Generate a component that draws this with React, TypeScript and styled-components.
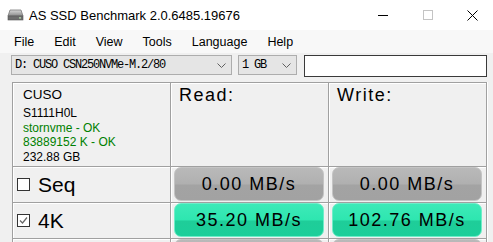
import React from 'react';
import styled, { createGlobalStyle } from 'styled-components';

const GlobalStyle = createGlobalStyle`
  html, body {
    margin: 0;
    padding: 0;
  }
  body {
    width: 493px;
    height: 242px;
    overflow: hidden;
    background: #f0f0f0;
    font-family: "Liberation Sans", Arial, sans-serif;
  }
`;

const Window = styled.div`
  width: 493px;
  height: 242px;
  overflow: hidden;
  background: #f0f0f0;
`;

const TitleBar = styled.div`
  display: flex;
  align-items: center;
  height: 30px;
  background: #fff;
  padding-left: 7px;
`;

const Title = styled.span`
  flex: 1;
  margin-left: 5px;
  font-size: 13px;
  color: #000;
`;

const Controls = styled.div`
  display: flex;
  margin-right: -2px;
`;

const WinButton = styled.div`
  width: 45px;
  height: 30px;
  display: flex;
  align-items: center;
  justify-content: center;
`;

const MenuBar = styled.div`
  display: flex;
  align-items: center;
  height: 23px;
  padding-left: 4px;
  background: #f8f8f8;
`;

const MenuItem = styled.span`
  padding: 0 10px;
  font-size: 12.5px;
  color: #000;
`;

const Toolbar = styled.div`
  display: flex;
  align-items: flex-start;
  padding: 2px 0 0 11px;
`;

const Combo = styled.div<{ $w: number; $gap: number }>`
  box-sizing: border-box;
  width: ${p => p.$w}px;
  height: 20px;
  margin-right: ${p => p.$gap}px;
  display: flex;
  align-items: center;
  padding: 0 5px 0 3px;
  border: 1px solid #adadad;
  background: #e5e5e5;
  font-family: "Liberation Mono", monospace;
  font-size: 12px;
  letter-spacing: -1.2px;
  color: #000;
`;

const ComboText = styled.span`
  flex: 1;
  white-space: nowrap;
`;

const TextBox = styled.div`
  box-sizing: border-box;
  width: 183px;
  height: 22px;
  border: 1px solid #3a3a3a;
  background: #fff;
`;

const Grid = styled.div`
  display: grid;
  grid-template-columns: repeat(3, 158px);
  grid-template-rows: 84px 36px 36px 36px;
  margin: 5px 0 0 12px;
  width: 474px;
  border-right: 1px solid #a0a0a0;
  box-shadow: 1px 0 0 #fff;
`;

const Cell = styled.div`
  box-sizing: border-box;
  border-top: 1px solid #a0a0a0;
  border-left: 1px solid #a0a0a0;
  box-shadow: inset 1px 1px 0 #fff;
  display: flex;
  min-width: 0;
`;

const Info = styled.div`
  padding: 4px 0 0 10px;
  font-size: 12px;
  line-height: 14.5px;
`;

const Model = styled.div`
  font-size: 13.5px;
  line-height: 15px;
  margin-bottom: 4px;
  color: #000;
`;

const InfoLine = styled.div<{ $ok?: boolean }>`
  color: ${p => (p.$ok ? '#008000' : '#000')};
  white-space: nowrap;
`;

const Heading = styled.div`
  padding: 2px 0 0 8px;
  font-size: 18px;
  line-height: 21px;
  letter-spacing: 1.5px;
  color: #000;
`;

const Label = styled.div`
  display: flex;
  align-items: center;
  padding-left: 4px;
  font-size: 21px;
  color: #000;
`;

const Box = styled.div`
  box-sizing: border-box;
  width: 13px;
  height: 13px;
  margin-right: 8px;
  border: 1px solid #333;
  background: #fff;
  display: flex;
  align-items: center;
  justify-content: center;
`;

const Result = styled.div<{ $on: boolean }>`
  box-sizing: border-box;
  flex: 1;
  height: 34px;
  margin: 0 4px 0 3px;
  border-radius: 7px;
  display: flex;
  align-items: center;
  justify-content: center;
  font-size: 18px;
  letter-spacing: 1.5px;
  color: #000;
  border: 1px solid ${p => (p.$on ? '#6eedc8' : '#c4c4c4')};
  background: ${p =>
    p.$on
      ? 'linear-gradient(#3deab8 0%, #2ee6b0 50%, #1fcd99 53%, #1bcf9a 100%)'
      : 'linear-gradient(#b9b9b9 0%, #b0b0b0 50%, #a3a3a3 53%, #a2a2a2 100%)'};
`;

const DriveIcon = () => (
  <svg width="17" height="12" viewBox="0 0 17 12">
    <defs>
      <linearGradient id="dg" x1="0" y1="0" x2="0" y2="1">
        <stop offset="0" stopColor="#d8d8d8" />
        <stop offset="1" stopColor="#8a8a8a" />
      </linearGradient>
    </defs>
    <path d="M3 1 H14 L16 7 H1 Z" fill="url(#dg)" stroke="#7a7a7a" strokeWidth="0.8" />
    <rect x="1" y="7" width="15" height="4" fill="#6e6e6e" stroke="#555" strokeWidth="0.6" />
    <rect x="12" y="8.3" width="2" height="1.2" fill="#b8e0b0" />
  </svg>
);

const Chevron = () => (
  <svg width="9" height="5" viewBox="0 0 9 5">
    <path d="M0.5 0.5 L4.5 4.5 L8.5 0.5" fill="none" stroke="#606060" strokeWidth="1" />
  </svg>
);

const Check = () => (
  <svg width="9" height="9" viewBox="0 0 9 9">
    <path d="M1 4.5 L3.5 7 L8 1.5" fill="none" stroke="#666" strokeWidth="1.2" />
  </svg>
);

// the last row is cut by the window edge, only the button tops show
const rows = [
  { name: 'Seq', checked: false, read: '0.00 MB/s', write: '0.00 MB/s', on: false },
  { name: '4K', checked: true, read: '35.20 MB/s', write: '102.76 MB/s', on: true },
  { name: '', checked: false, read: '', write: '', on: false },
];

const App = () => {
  return (
    <Window>
      <GlobalStyle />
      <TitleBar>
        <DriveIcon />
        <Title>AS SSD Benchmark 2.0.6485.19676</Title>
        <Controls>
          <WinButton>
            <svg width="10" height="10" viewBox="0 0 10 10">
              <path d="M0 5.5 H10" stroke="#000" strokeWidth="1" />
            </svg>
          </WinButton>
          <WinButton>
            <svg width="10" height="10" viewBox="0 0 10 10">
              <rect x="0.5" y="0.5" width="9" height="9" fill="none" stroke="#c4c4c4" strokeWidth="1" />
            </svg>
          </WinButton>
          <WinButton>
            <svg width="11" height="11" viewBox="0 0 11 11">
              <path d="M0.5 0.5 L10.5 10.5 M10.5 0.5 L0.5 10.5" stroke="#000" strokeWidth="1" />
            </svg>
          </WinButton>
        </Controls>
      </TitleBar>
      <MenuBar>
        {['File', 'Edit', 'View', 'Tools', 'Language', 'Help'].map(m => (
          <MenuItem key={m}>{m}</MenuItem>
        ))}
      </MenuBar>
      <Toolbar>
        <Combo $w={221} $gap={6}>
          <ComboText>D: CUSO CSN250NVMe-M.2/80</ComboText>
          <Chevron />
        </Combo>
        <Combo $w={59} $gap={7}>
          <ComboText>1 GB</ComboText>
          <Chevron />
        </Combo>
        <TextBox />
      </Toolbar>
      <Grid>
        <Cell>
          <Info>
            <Model>CUSO</Model>
            <InfoLine>S1111H0L</InfoLine>
            <InfoLine $ok>stornvme - OK</InfoLine>
            <InfoLine $ok>83889152 K - OK</InfoLine>
            <InfoLine>232.88 GB</InfoLine>
          </Info>
        </Cell>
        <Cell>
          <Heading>Read:</Heading>
        </Cell>
        <Cell>
          <Heading>Write:</Heading>
        </Cell>
        {rows.map((r, i) => (
          <React.Fragment key={i}>
            <Cell>
              {r.name && (
                <Label>
                  <Box>{r.checked && <Check />}</Box>
                  {r.name}
                </Label>
              )}
            </Cell>
            <Cell>
              <Result $on={r.on}>{r.read}</Result>
            </Cell>
            <Cell>
              <Result $on={r.on}>{r.write}</Result>
            </Cell>
          </React.Fragment>
        ))}
      </Grid>
    </Window>
  );
};

export default App;
